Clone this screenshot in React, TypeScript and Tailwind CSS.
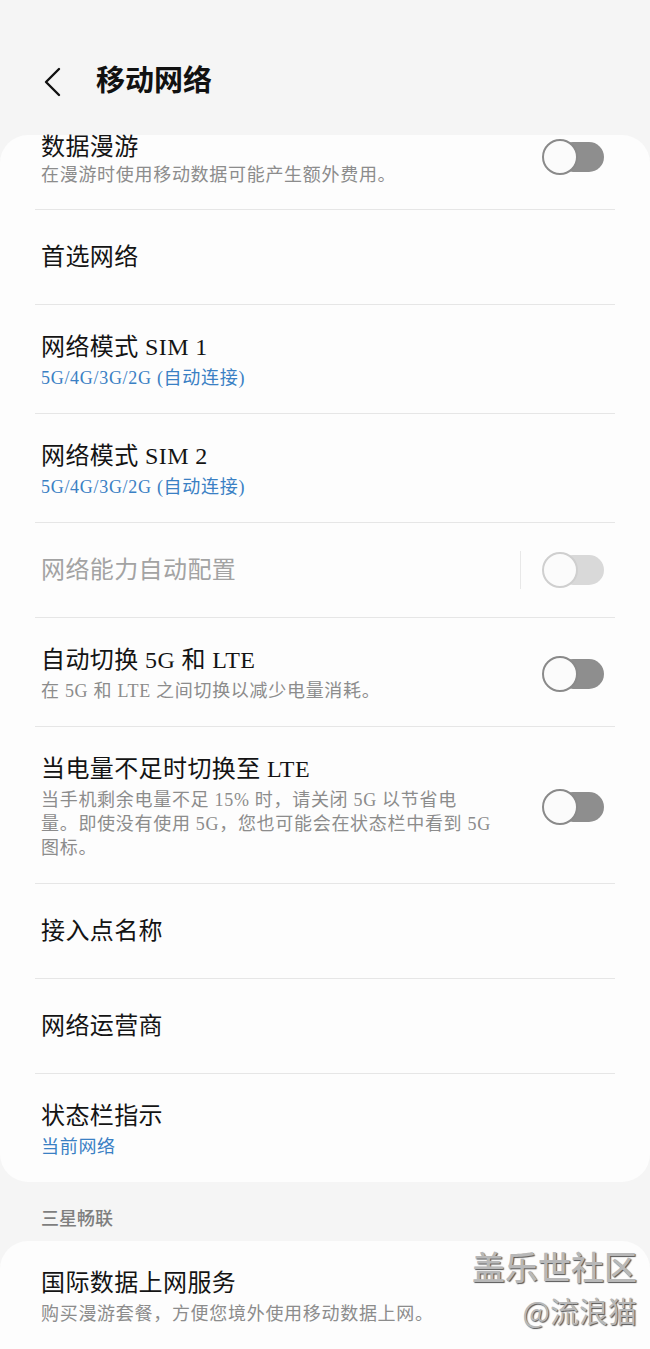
const font = "font-['Liberation_Serif','Noto_Sans_CJK_SC',serif]";

type RowProps = {
  title: string;
  sub?: React.ReactNode;
  blue?: boolean;
  toggle?: "off" | "disabled";
  disabled?: boolean;
  last?: boolean;
  first?: boolean;
};

function Toggle({ disabled }: { disabled?: boolean }) {
  return (
    <div className="relative w-[62px] h-[36px] shrink-0">
      <div
        className={`absolute right-0 top-[3px] w-[46px] h-[30px] rounded-full ${
          disabled ? "bg-[#d9d9d9]" : "bg-[#8e8e8e]"
        }`}
      />
      <div
        className={`absolute left-0 top-0 w-[36px] h-[36px] rounded-full border-2 bg-[#fbfbfb] ${
          disabled ? "border-[#cfcfcf]" : "border-[#8a8a8a]"
        }`}
      />
    </div>
  );
}

function Row({ title, sub, blue, toggle, disabled, last, first }: RowProps) {
  const pad = first ? "pt-[1px] pb-[22px]" : sub ? "pt-[26px] pb-[23px]" : "pt-[31px] pb-[31px]";
  return (
    <div className={`flex items-center px-[6px] pr-[11px] ${pad} ${last ? "" : "border-b border-[#e6e6e6]"}`}>
      <div className="flex-1 min-w-0">
        <div
          className={`text-[24px] tracking-[0.4px] ${first ? "leading-[22px]" : "leading-[32px]"} ${
            disabled ? "text-[#a3a3a3]" : "text-[#141414]"
          }`}
        >
          {title}
        </div>
        {sub && (
          <div
            className={`${first ? "mt-[5px]" : "mt-[3px]"} text-[18px] leading-[24px] tracking-[0.7px] ${
              blue ? "text-[#3a80c4]" : "text-[#8c8c8c]"
            }`}
          >
            {sub}
          </div>
        )}
      </div>
      {toggle && (
        <div className={`h-[32px] flex items-center ${first ? "-mt-[10px]" : ""}`}>
          {toggle === "disabled" && <div className="w-px h-[38px] bg-[#e8e8e8] mr-[21px] shrink-0" />}
          <Toggle disabled={toggle === "disabled"} />
        </div>
      )}
    </div>
  );
}

export default function App() {
  return (
    <div className={`relative w-full h-[1349px] overflow-hidden bg-[#f5f5f5] ${font}`}>
      {/* 标题栏 */}
      <div className="h-[135px] flex items-start pt-[61px]">
        <svg className="ml-[41px] mt-[5px]" width="22" height="32" viewBox="0 0 22 32" fill="none">
          <polyline points="18,3 5,16 18,29" stroke="#111" strokeWidth="2.4" strokeLinecap="round" strokeLinejoin="round" />
        </svg>
        <h1 className="ml-[33px] text-[29px] leading-[40px] font-bold text-[#111]">移动网络</h1>
      </div>

      <div className="bg-[#fdfdfd] rounded-[28px] px-[35px]">
        <Row first title="数据漫游" sub="在漫游时使用移动数据可能产生额外费用。" toggle="off" />
        <Row title="首选网络" />
        <Row title="网络模式 SIM 1" sub="5G/4G/3G/2G (自动连接)" blue />
        <Row title="网络模式 SIM 2" sub="5G/4G/3G/2G (自动连接)" blue />
        <Row title="网络能力自动配置" disabled toggle="disabled" />
        <Row title="自动切换 5G 和 LTE" sub="在 5G 和 LTE 之间切换以减少电量消耗。" toggle="off" />
        <Row
          title="当电量不足时切换至 LTE"
          sub={
            <>
              当手机剩余电量不足 15% 时，请关闭 5G 以节省电
              <br />
              量。即使没有使用 5G，您也可能会在状态栏中看到 5G
              <br />
              图标。
            </>
          }
          toggle="off"
        />
        <Row title="接入点名称" />
        <Row title="网络运营商" />
        <Row title="状态栏指示" sub="当前网络" blue last />
      </div>

      <div className="mt-[25px] mb-[10px] px-[41px] text-[18px] leading-[24px] font-medium text-[#7e7e7e]">三星畅联</div>

      <div className="bg-[#fdfdfd] rounded-[28px] px-[35px] pb-[40px]">
        <Row title="国际数据上网服务" sub="购买漫游套餐，方便您境外使用移动数据上网。" last />
      </div>

      {/* 水印 */}
      <div className="absolute right-[13px] top-[1246px] flex flex-col items-end font-['Noto_Sans_CJK_SC',sans-serif] text-[#b8b8b8] [text-shadow:1px_1px_1px_#555]">
        <div className="text-[33px] leading-[40px] font-medium">盖乐世社区</div>
        <div className="text-[29px] leading-[40px] mt-[4px]">@流浪猫</div>
      </div>
    </div>
  );
}
